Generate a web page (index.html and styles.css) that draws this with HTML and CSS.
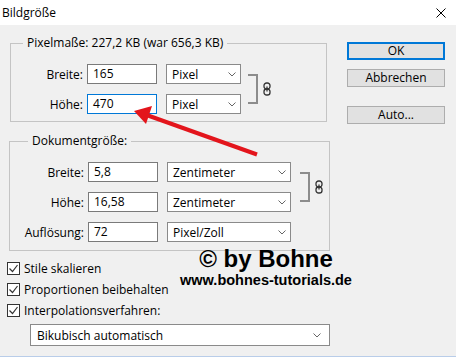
FILE: index.html
```html
<!DOCTYPE html>
<html>
<head>
  <title>Bildgröße</title>
  <link rel="stylesheet" href="styles.css">
</head>
<body>

<div class="dialog">
  <div class="titlebar">
    <span class="title">Bildgröße</span>
    <svg class="close" width="10" height="10" viewBox="0 0 10 10">
      <path d="M0.5 0.5 L9.5 9.5 M9.5 0.5 L0.5 9.5" stroke="#000" stroke-width="1" fill="none"/>
    </svg>
  </div>

  <div class="content">
    <div class="main">

      <fieldset class="group pixel">
        <legend>Pixelmaße: 227,2 KB (war 656,3 KB)</legend>
        <div class="linked">
          <div class="rows">
            <div class="row">
              <span class="label">Breite:</span>
              <span class="field">165</span>
              <span class="select">Pixel<svg class="chev" width="8" height="5" viewBox="0 0 8 5"><polyline points="0.5,0.5 4,4 7.5,0.5" /></svg></span>
            </div>
            <div class="row">
              <span class="label">Höhe:</span>
              <span class="field active">470</span>
              <span class="select">Pixel<svg class="chev" width="8" height="5" viewBox="0 0 8 5"><polyline points="0.5,0.5 4,4 7.5,0.5" /></svg></span>
            </div>
          </div>
          <span class="bracket"></span>
          <svg class="chain" width="8" height="14" viewBox="0 0 8 14">
            <rect x="1" y="1" width="6" height="6" rx="2.6" />
            <rect x="1" y="7" width="6" height="6" rx="2.6" />
            <line x1="4" y1="4.5" x2="4" y2="9.5" />
          </svg>
        </div>
      </fieldset>

      <fieldset class="group doc">
        <legend>Dokumentgröße:</legend>
        <div class="linked">
          <div class="rows">
            <div class="row">
              <span class="label">Breite:</span>
              <span class="field">5,8</span>
              <span class="select">Zentimeter<svg class="chev" width="8" height="5" viewBox="0 0 8 5"><polyline points="0.5,0.5 4,4 7.5,0.5" /></svg></span>
            </div>
            <div class="row">
              <span class="label">Höhe:</span>
              <span class="field">16,58</span>
              <span class="select">Zentimeter<svg class="chev" width="8" height="5" viewBox="0 0 8 5"><polyline points="0.5,0.5 4,4 7.5,0.5" /></svg></span>
            </div>
          </div>
          <span class="bracket"></span>
          <svg class="chain" width="8" height="14" viewBox="0 0 8 14">
            <rect x="1" y="1" width="6" height="6" rx="2.6" />
            <rect x="1" y="7" width="6" height="6" rx="2.6" />
            <line x1="4" y1="4.5" x2="4" y2="9.5" />
          </svg>
        </div>
        <div class="row solo">
          <span class="label">Auflösung:</span>
          <span class="field">72</span>
          <span class="select">Pixel/Zoll<svg class="chev" width="8" height="5" viewBox="0 0 8 5"><polyline points="0.5,0.5 4,4 7.5,0.5" /></svg></span>
        </div>
      </fieldset>

      <div class="checks">
        <div class="check"><span class="box"><svg width="11" height="11" viewBox="0 0 11 11"><polyline points="1.5,5.5 4.5,8.5 9.5,2" /></svg></span>Stile skalieren</div>
        <div class="check"><span class="box"><svg width="11" height="11" viewBox="0 0 11 11"><polyline points="1.5,5.5 4.5,8.5 9.5,2" /></svg></span>Proportionen beibehalten</div>
        <div class="check"><span class="box"><svg width="11" height="11" viewBox="0 0 11 11"><polyline points="1.5,5.5 4.5,8.5 9.5,2" /></svg></span>Interpolationsverfahren:</div>
      </div>

      <div class="select method">Bikubisch automatisch<svg class="chev" width="8" height="5" viewBox="0 0 8 5"><polyline points="0.5,0.5 4,4 7.5,0.5" /></svg></div>
    </div>

    <div class="side">
      <div class="btn default">OK</div>
      <div class="btn">Abbrechen</div>
      <div class="btn auto">Auto...</div>
    </div>
  </div>

  <!-- red arrow drawn over the dialog -->
  <svg class="arrow" width="456" height="357" viewBox="0 0 456 357">
    <line x1="148" y1="115.5" x2="257" y2="154.5" stroke="#e3151c" stroke-width="4" />
    <polygon points="134,111 152,106 146,124" fill="#e3151c" />
  </svg>

  <div class="watermark">
    <div class="wm-big">© by Bohne</div>
    <div class="wm-url">www.bohnes-tutorials.de</div>
  </div>
</div>

</body>
</html>
```

FILE: styles.css
```css
* {
  margin: 0;
  padding: 0;
  box-sizing: border-box;
}

body {
  font-family: "Open Sans", "Noto Sans", sans-serif;
  font-size: 12px;
  color: #000;
  background-color: #f0f0f0;
}

.dialog {
  position: relative;
  width: 456px;
  height: 357px;
  background-color: #f0f0f0;
  border-bottom: 1px solid #b9cde9;
}

.titlebar {
  height: 25px;
  background-color: #fff;
  display: flex;
  align-items: center;
  justify-content: space-between;
  padding: 0 10px 0 2px;
}

.content {
  display: flex;
}

.main {
  width: 340px;
  padding-left: 7px;
}

/* group boxes */
.group {
  border: 1px solid #c4c4c4;
  padding: 13px 0 7px;
}

.group legend {
  padding: 0 4px;
  line-height: 16px;
}

.pixel {
  margin: 10px 0 0 3px;
  width: 317px;
}

.pixel legend {
  margin-left: 12px;
}

.doc {
  margin: 11px 0 0 2px;
  width: 321px;
  padding-bottom: 8px;
}

.doc legend {
  margin-left: 18px;
}

.linked {
  display: flex;
  align-items: center;
}

.rows {
  display: flex;
  flex-direction: column;
  gap: 10px;
}

.row {
  display: flex;
  align-items: center;
  height: 20px;
}

.row.solo {
  margin-top: 10px;
}

.label {
  width: 72px;
  margin-right: 4px;
  text-align: right;
}

.doc .label {
  width: 74px;
}

.field {
  width: 70px;
  height: 20px;
  line-height: 18px;
  padding-left: 5px;
  background-color: #fff;
  border: 1px solid #7a7a7a;
}

.field.active {
  border-color: #0078d7;
}

.select {
  display: flex;
  align-items: center;
  justify-content: space-between;
  width: 75px;
  height: 20px;
  margin-left: 9px;
  padding: 0 4px 0 5px;
  background-color: #fff;
  border: 1px solid #8a8a8a;
}

.doc .select {
  width: 124px;
}

.chev polyline {
  fill: none;
  stroke: #666;
  stroke-width: 1;
}

.bracket {
  width: 10px;
  height: 30px;
  margin-left: 7px;
  border: 2px solid #8c8c8c;
  border-left: none;
}

.doc .bracket {
  margin-left: 9px;
}

.chain {
  margin-left: 5px;
}

.chain rect,
.chain line {
  fill: none;
  stroke: #333;
  stroke-width: 1.3;
}

/* check boxes */
.checks {
  margin-top: 7px;
}

.check {
  display: flex;
  align-items: center;
  height: 21px;
}

.box {
  width: 13px;
  height: 13px;
  margin-right: 4px;
  background-color: #fff;
  border: 1px solid #333;
}

.box svg {
  display: block;
}

.box polyline {
  fill: none;
  stroke: #333;
  stroke-width: 1.2;
}

.select.method {
  width: 300px;
  height: 22px;
  margin: 3px 0 0 23px;
  padding: 0 8px 0 6px;
}

/* buttons */
.side {
  display: flex;
  flex-direction: column;
  padding-top: 17px;
  margin-left: 7px;
}

.btn {
  width: 98px;
  height: 18px;
  line-height: 16px;
  text-align: center;
  background-color: #e1e1e1;
  border: 1px solid #adadad;
  margin-bottom: 9px;
}

.btn.default {
  border: 2px solid #0078d7;
  line-height: 14px;
}

.btn.auto {
  margin-top: 10px;
}

/* overlays */
.arrow {
  position: absolute;
  top: 0;
  left: 0;
  pointer-events: none;
}

.watermark {
  position: absolute;
  left: 166px;
  top: 245px;
  width: 200px;
  text-align: center;
  font-family: "Liberation Sans", Arial, sans-serif;
  font-weight: bold;
  color: #000;
}

.wm-big {
  font-size: 24px;
  line-height: 27px;
}

.wm-url {
  font-size: 14.5px;
  line-height: 17px;
}
```
